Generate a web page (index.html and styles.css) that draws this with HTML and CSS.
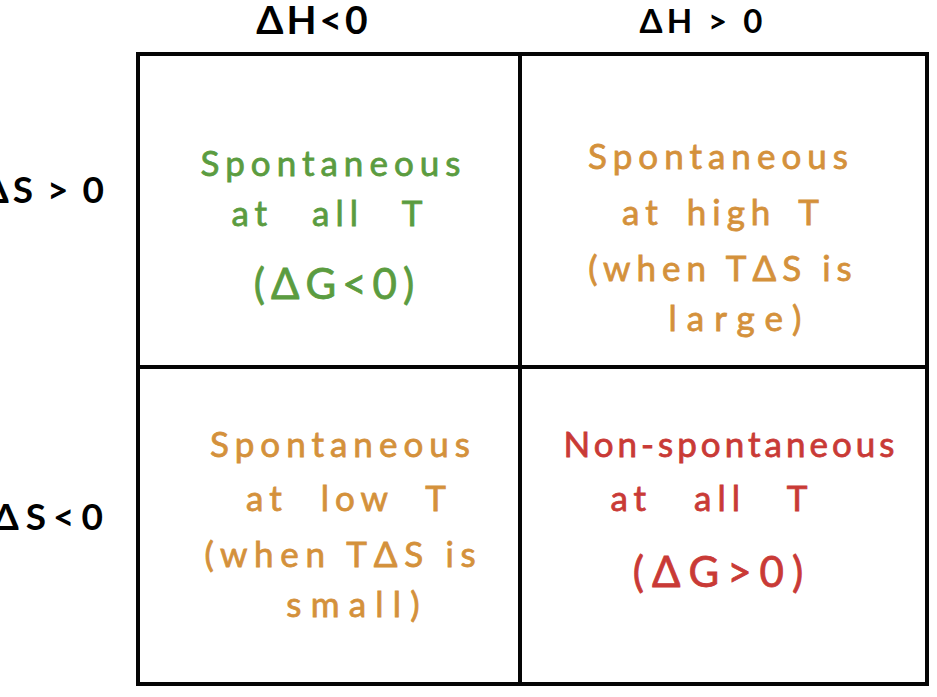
FILE: index.html
```html
<!DOCTYPE html>
<html lang="en">
<head>
<meta charset="utf-8">
<title>Gibbs free energy spontaneity chart</title>
<link rel="stylesheet" href="styles.css">
</head>
<body>
<div class="page">
  <div class="heads">
    <div class="head head-a">ΔH&lt;0</div>
    <div class="head head-b">ΔH &gt; 0</div>
  </div>
  <div class="side">
    <div class="side-row"><span class="lab lab-a">ΔS &gt; 0</span></div>
    <div class="side-row"><span class="lab lab-b">ΔS&lt;0</span></div>
  </div>
  <div class="board">
    <div class="cell cell-tl green">
      <div class="ln tl1">Spontaneous</div>
      <div class="ln tl2">at&nbsp; all&nbsp; T</div>
      <div class="ln big tl3">(ΔG&lt;0)</div>
    </div>
    <div class="cell cell-tr orange">
      <div class="ln tr1">Spontaneous</div>
      <div class="ln tr2">at high T</div>
      <div class="ln tr3">(when TΔS is</div>
      <div class="ln tr4">large)</div>
    </div>
    <div class="cell cell-bl orange">
      <div class="ln bl1">Spontaneous</div>
      <div class="ln bl2">at&nbsp; low&nbsp; T</div>
      <div class="ln bl3">(when TΔS is</div>
      <div class="ln bl4">small)</div>
    </div>
    <div class="cell cell-br red">
      <div class="ln br1">Non-spontaneous</div>
      <div class="ln br2">at&nbsp; all&nbsp; T</div>
      <div class="ln big br3">(ΔG&gt;0)</div>
    </div>
  </div>
</div>
</body>
</html>
```
FILE: styles.css
```css
html, body {
  margin: 0;
  padding: 0;
  background: #ffffff;
}

body {
  font-family: Lato, "Open Sans", "DejaVu Sans", sans-serif;
  width: 937px;
  height: 697px;
  overflow: hidden;
}

.page {
  display: grid;
  grid-template-columns: 136px 793px;
  grid-template-rows: 52px 634px;
}

/* column headers */
.heads {
  grid-column: 2;
  grid-row: 1;
  display: grid;
  grid-template-columns: 352px 418px;
  align-items: start;
}

.head {
  text-align: center;
  font-weight: 700;
  color: #000;
  white-space: nowrap;
}

.head-a {
  font-size: 39px;
  line-height: 39px;
  letter-spacing: 3px;
  margin-left: 3px;
}

.head-b {
  font-size: 33px;
  line-height: 40px;
  letter-spacing: 4px;
  margin-left: 12px;
}

/* row labels (partly run off the left edge, as in the original) */
.side {
  grid-column: 1;
  grid-row: 2;
  display: grid;
  grid-template-rows: 315px 319px;
  overflow: visible;
}

.side-row {
  white-space: nowrap;
}

.lab {
  display: inline-block;
  font-weight: 700;
  color: #000;
  line-height: 40px;
}

.lab-a {
  font-size: 37px;
  letter-spacing: 4px;
  word-spacing: -3px;
  margin-top: 117px;
  margin-left: -17px;
}

.lab-b {
  font-size: 37px;
  letter-spacing: 7px;
  margin-top: 129px;
  margin-left: -7px;
}

/* the 2x2 board */
.board {
  grid-column: 2;
  grid-row: 2;
  display: grid;
  grid-template-columns: 378px 403px;
  grid-template-rows: 309px 313px;
  gap: 4px;
  padding: 4px;
  background: #050505;
}

.cell {
  background: #ffffff;
  display: flex;
  flex-direction: column;
  align-items: center;
}

.green { color: #5b9c40; }
.orange { color: #d4913b; }
.red { color: #c93a36; }

.ln {
  font-size: 35px;
  line-height: 56px;
  letter-spacing: 6px;
  white-space: nowrap;
  -webkit-text-stroke: 0.8px currentColor;
}

.big {
  font-size: 42px;
  letter-spacing: 6px;
}

.cell-tl { padding-top: 78px; }
.tl1 { margin-left: 9px; }
.tl2 { margin-left: 2px; margin-top: -6px; word-spacing: 4.5px; }
.tl3 { margin-left: 16px; margin-top: 15px; }

.cell-tr { padding-top: 71px; }
.tr1 { margin-left: -5px; }
.tr2 { margin-left: 0px; word-spacing: 8px; }
.tr3 { margin-left: -1px; }
.tr4 { margin-left: 33px; margin-top: -6px; letter-spacing: 10px; }

.cell-bl { padding-top: 46px; }
.bl1 { margin-left: 28px; }
.bl2 { margin-left: 40px; margin-top: -2px; word-spacing: 1.5px; }
.bl3 { margin-left: 29px; letter-spacing: 6.7px; }
.bl4 { margin-left: 57px; margin-top: -6px; letter-spacing: 9.2px; }

.cell-br { padding-top: 46px; }
.br1 { margin-left: 15px; letter-spacing: 4px; }
.br2 { margin-left: -23px; margin-top: -2px; word-spacing: 6px; }
.br3 { margin-left: -3px; margin-top: 18px; letter-spacing: 8px; }
```
